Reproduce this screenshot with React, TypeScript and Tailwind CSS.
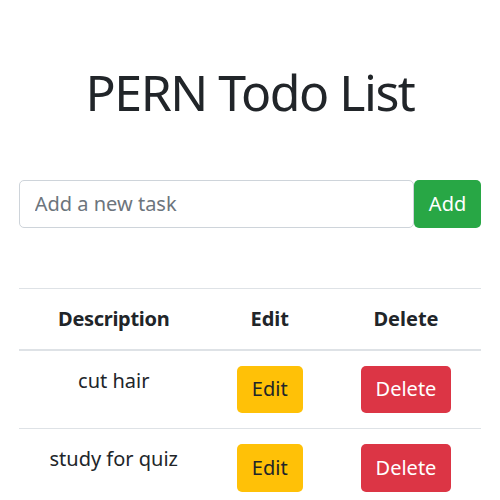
import { useState } from "react";

const todos = [
  { id: 1, description: "cut hair" },
  { id: 2, description: "study for quiz" },
];

const App = () => {
  const [text, setText] = useState("");

  return (
    <div className="min-h-screen bg-white text-[#212529] font-['Noto_Sans',sans-serif] text-[20px] leading-[30px]">
      <div className="px-[18.75px]">
        <h1 className="mt-[62px] mb-0 text-center text-[50px] leading-[60px] font-normal tracking-[-1.5px]">PERN Todo List</h1>

        <form className="mt-[58px] flex" onSubmit={(e) => e.preventDefault()}>
          <input
            type="text"
            value={text}
            onChange={(e) => setText(e.target.value)}
            placeholder="Add a new task"
            className="h-[47.5px] flex-1 min-w-0 rounded-[5px] border border-[#ced4da] px-[15px] text-[20px] text-[#495057] placeholder:text-[#6c757d] outline-none"
          />
          <button className="h-[47.5px] rounded-[5px] bg-[#28a745] px-[15px] text-[20px] text-white">Add</button>
        </form>

        <table className="mt-[60px] w-full table-fixed border-collapse text-center">
          <colgroup>
            <col className="w-[190px]" />
            <col className="w-[122px]" />
            <col />
          </colgroup>
          <thead>
            <tr>
              <th className="border-t border-b-2 border-[#dee2e6] p-[15px] align-bottom font-bold tracking-[-0.3px]">Description</th>
              <th className="border-t border-b-2 border-[#dee2e6] p-[15px] align-bottom font-bold">Edit</th>
              <th className="border-t border-b-2 border-[#dee2e6] p-[15px] align-bottom font-bold">Delete</th>
            </tr>
          </thead>
          <tbody>
            {todos.map((todo) => (
              <tr key={todo.id}>
                <td className="border-t border-[#dee2e6] p-[15px] align-top">{todo.description}</td>
                <td className="border-t border-[#dee2e6] p-[15px] align-top">
                  <button className="h-[47.5px] rounded-[5px] bg-[#ffc107] px-[15px] text-[#212529]">Edit</button>
                </td>
                <td className="border-t border-[#dee2e6] p-[15px] align-top">
                  <button className="h-[47.5px] rounded-[5px] bg-[#dc3545] px-[15px] text-white">Delete</button>
                </td>
              </tr>
            ))}
          </tbody>
        </table>
      </div>
    </div>
  );
};

export default App;
